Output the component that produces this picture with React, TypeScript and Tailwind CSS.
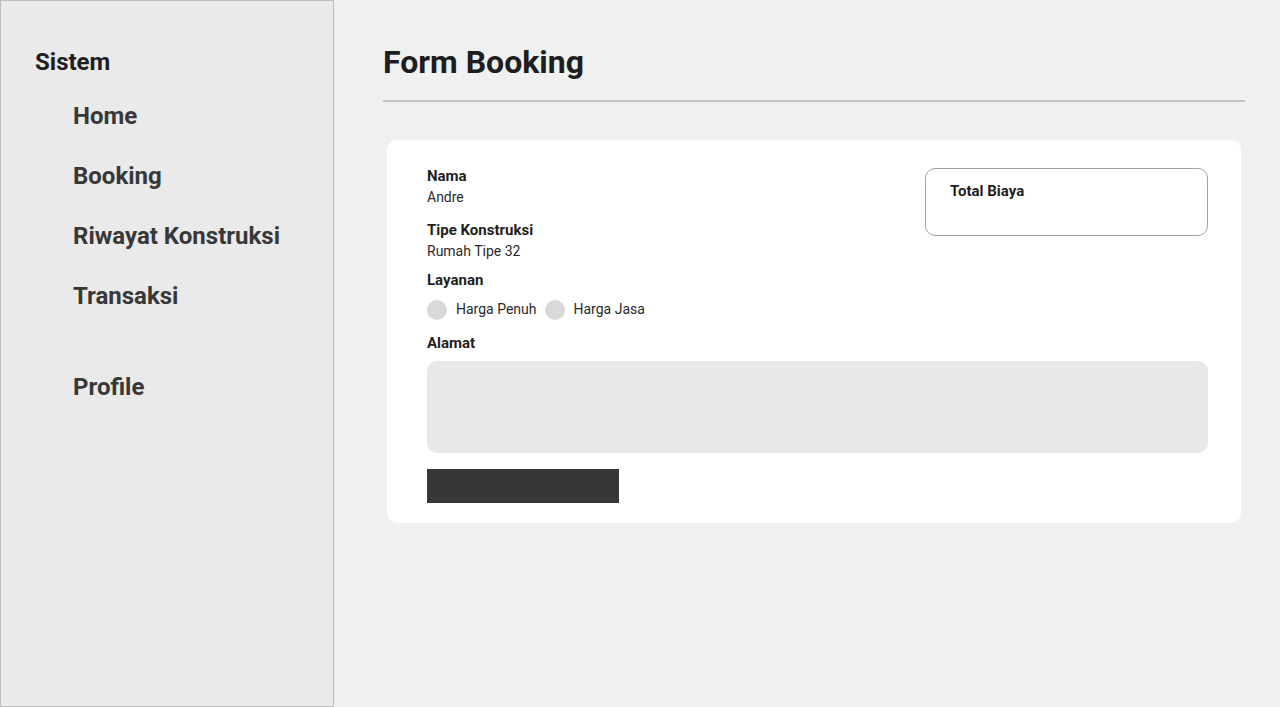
const navItems = ["Home", "Booking", "Riwayat Konstruksi", "Transaksi"];

const Sidebar = () => {
  return (
    <aside className="w-[334px] shrink-0 border border-[#bdbdbd] bg-[#eaeaea] pl-[34px] pt-[43px]">
      <h2 className="text-[24px] font-bold leading-[36px] text-[#1e1e1e]">Sistem</h2>
      <nav className="mt-[18px] pl-[38px]">
        {navItems.map((item) => (
          <a key={item} href="#" className="block h-[60px] text-[24px] font-bold leading-[36px] text-[#383838]">
            {item}
          </a>
        ))}
        <a href="#" className="mt-[31px] block text-[24px] font-bold leading-[36px] text-[#383838]">
          Profile
        </a>
      </nav>
    </aside>
  );
};

const Radio = ({ label }: { label: string }) => (
  <label className="flex items-center gap-[9px]">
    <span className="h-[20px] w-[20px] rounded-full bg-[#d9d9d9]" />
    <span className="text-[14px] text-[#2a2a2a]">{label}</span>
  </label>
);

const App = () => {
  return (
    <div className="flex h-[707px] w-[1280px] bg-[#f0f0f0] font-['Roboto',sans-serif]">
      <Sidebar />
      <main className="flex-1 pl-[49px] pr-[35px] pt-[42px]">
        <h1 className="text-[32px] font-bold leading-[40px] text-[#1e1e1e]">Form Booking</h1>
        <div className="mt-[18px] h-[2px] bg-[#c2c2c2]" />

        <div className="mx-[4px] mt-[38px] flex h-[383px] flex-col rounded-[10px] bg-white px-[40px] pt-[26px]">
          <div className="flex justify-between">
            <div className="flex flex-col">
              <span className="text-[15px] font-bold leading-[20px] text-[#1e1e1e]">Nama</span>
              <span className="mt-[1px] text-[14px] leading-[20px] text-[#2a2a2a]">Andre</span>
              <span className="mt-[13px] text-[15px] font-bold leading-[20px] text-[#1e1e1e]">Tipe Konstruksi</span>
              <span className="mt-[1px] text-[14px] leading-[20px] text-[#2a2a2a]">Rumah Tipe 32</span>
              <span className="mt-[9px] text-[15px] font-bold leading-[20px] text-[#1e1e1e]">Layanan</span>
              <div className="mt-[9px] flex items-center gap-[8px]">
                <Radio label="Harga Penuh" />
                <Radio label="Harga Jasa" />
              </div>
            </div>
            <div className="mr-[-7px] mt-[2px] h-[68px] w-[283px] rounded-[10px] border border-[#a3a3a3] px-[24px] pt-[10px]">
              <span className="text-[15px] font-bold leading-[20px] text-[#1e1e1e]">Total Biaya</span>
            </div>
          </div>

          <span className="mt-[13px] text-[15px] font-bold leading-[20px] text-[#1e1e1e]">Alamat</span>
          <textarea className="mr-[-7px] mt-[8px] h-[92px] resize-none rounded-[10px] bg-[#e8e8e8] outline-none" />
          <button className="mt-[16px] h-[34px] w-[192px] bg-[#373737]" />
        </div>
      </main>
    </div>
  );
};

export default App;
